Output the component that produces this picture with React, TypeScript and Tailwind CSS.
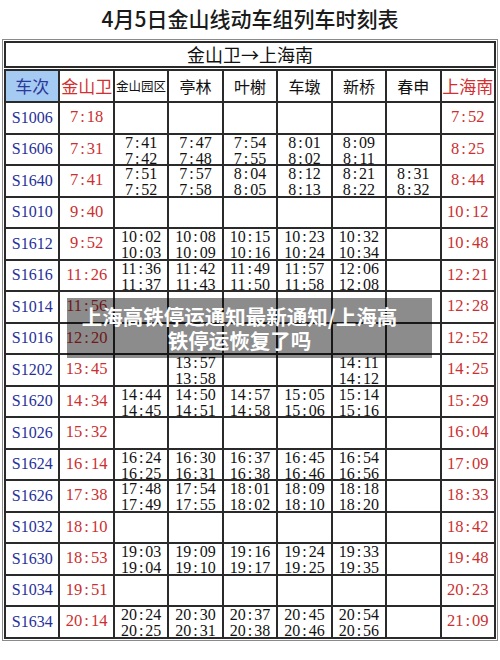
import React from "react";

type Cell = string | [string, string] | null;

interface Row {
  train: string;
  start: string;
  stops: Cell[]; // 金山园区, 亭林, 叶榭, 车墩, 新桥, 春申
  end: string;
}

const rows: Row[] = [
  { train: "S1006", start: "7:18", stops: [null, null, null, null, null, null], end: "7:52" },
  { train: "S1606", start: "7:31", stops: [["7:41", "7:42"], ["7:47", "7:48"], ["7:54", "7:55"], ["8:01", "8:02"], ["8:09", "8:11"], null], end: "8:25" },
  { train: "S1640", start: "7:41", stops: [["7:51", "7:52"], ["7:57", "7:58"], ["8:04", "8:05"], ["8:12", "8:13"], ["8:21", "8:22"], ["8:31", "8:32"]], end: "8:44" },
  { train: "S1010", start: "9:40", stops: [null, null, null, null, null, null], end: "10:12" },
  { train: "S1612", start: "9:52", stops: [["10:02", "10:03"], ["10:08", "10:09"], ["10:15", "10:16"], ["10:23", "10:24"], ["10:32", "10:34"], null], end: "10:48" },
  { train: "S1616", start: "11:26", stops: [["11:36", "11:37"], ["11:42", "11:43"], ["11:49", "11:50"], ["11:57", "11:58"], ["12:06", "12:08"], null], end: "12:21" },
  { train: "S1014", start: "11:56", stops: [null, null, null, null, null, null], end: "12:28" },
  { train: "S1016", start: "12:20", stops: [null, null, null, null, null, null], end: "12:52" },
  { train: "S1202", start: "13:45", stops: [null, ["13:57", "13:58"], null, null, ["14:11", "14:12"], null], end: "14:25" },
  { train: "S1620", start: "14:34", stops: [["14:44", "14:45"], ["14:50", "14:51"], ["14:57", "14:58"], ["15:05", "15:06"], ["15:14", "15:16"], null], end: "15:29" },
  { train: "S1026", start: "15:32", stops: [null, null, null, null, null, null], end: "16:04" },
  { train: "S1624", start: "16:14", stops: [["16:24", "16:25"], ["16:30", "16:31"], ["16:37", "16:38"], ["16:45", "16:46"], ["16:54", "16:56"], null], end: "17:09" },
  { train: "S1626", start: "17:38", stops: [["17:48", "17:49"], ["17:54", "17:55"], ["18:01", "18:02"], ["18:09", "18:10"], ["18:18", "18:20"], null], end: "18:33" },
  { train: "S1032", start: "18:10", stops: [null, null, null, null, null, null], end: "18:42" },
  { train: "S1630", start: "18:53", stops: [["19:03", "19:04"], ["19:09", "19:10"], ["19:16", "19:17"], ["19:24", "19:25"], ["19:33", "19:35"], null], end: "19:48" },
  { train: "S1034", start: "19:51", stops: [null, null, null, null, null, null], end: "20:23" },
  { train: "S1634", start: "20:14", stops: [["20:24", "20:25"], ["20:30", "20:31"], ["20:37", "20:38"], ["20:45", "20:46"], ["20:54", "20:56"], null], end: "21:09" },
];

const serif = "font-['Liberation_Serif','Noto_Sans_CJK_SC',serif]";
const cjk = "font-['Noto_Sans_CJK_SC','Noto_Sans',sans-serif]";
const cell = "border-r-2 border-b-2 border-[#2a2a2a] overflow-hidden";

function Time({ t }: { t: string }) {
  const [h, m] = t.split(":");
  return (
    <span>
      {h}
      <span className="mx-[2px]">:</span>
      {m}
    </span>
  );
}

export default function App() {
  return (
    <div className="relative w-[500px] h-[660px] bg-white overflow-hidden">
      <div className={`h-[38px] flex items-center justify-center text-[21px] font-medium text-[#1a1a1a] ${cjk}`}>
        4月5日金山线动车组列车时刻表
      </div>

      <div className="mx-[2px] mt-[1px] border border-[#8a8a8a] p-[1px]">
        <div className={`h-[27px] border-2 border-[#2a2a2a] flex items-center justify-center text-[18px] text-[#111] ${cjk}`}>
          金山卫→上海南
        </div>
        <div className="mt-[1px] border-l-2 border-t-2 border-[#2a2a2a] grid grid-cols-9">
          <div className={`${cell} h-[32px] bg-[#a6cbf3] flex items-center justify-center text-[17px] text-[#2b3a9a] ${cjk}`}>车次</div>
          <div className={`${cell} h-[32px] flex items-center justify-center text-[17px] text-[#d23030] ${cjk}`}>金山卫</div>
          <div className={`${cell} h-[32px] flex items-center justify-center text-[12.5px] text-[#111] ${cjk}`}>金山园区</div>
          {["亭林", "叶榭", "车墩", "新桥", "春申"].map((s) => (
            <div key={s} className={`${cell} h-[32px] flex items-center justify-center text-[16px] text-[#111] ${cjk}`}>
              {s}
            </div>
          ))}
          <div className={`${cell} h-[32px] flex items-center justify-center text-[17px] text-[#d23030] ${cjk}`}>上海南</div>

          {rows.map((r) => (
            <React.Fragment key={r.train}>
              <div className={`${cell} h-[31.5px] flex items-center justify-center text-[16px] text-[#27309a] ${serif}`}>{r.train}</div>
              <div className={`${cell} h-[31.5px] flex items-center justify-center text-[16.5px] text-[#cc2f2f] ${serif}`}>
                <Time t={r.start} />
              </div>
              {r.stops.map((s, i) => (
                <div key={i} className={`${cell} h-[31.5px] flex flex-col items-center text-[16px] leading-[16px] text-[#111] ${serif}`}>
                  {s && (
                    <>
                      <Time t={s[0]} />
                      <Time t={s[1]} />
                    </>
                  )}
                </div>
              ))}
              <div className={`${cell} h-[31.5px] flex items-center justify-center text-[16.5px] text-[#cc2f2f] ${serif}`}>
                <Time t={r.end} />
              </div>
            </React.Fragment>
          ))}
        </div>
      </div>

      <div className="absolute left-[67px] top-[298px] w-[365px] h-[60px] bg-black/45 flex flex-col items-center justify-center pr-[20px]">
        <div className={`text-white text-[20.5px] leading-[24px] font-bold ${cjk}`}>上海高铁停运通知最新通知/上海高</div>
        <div className={`text-white text-[20.5px] leading-[24px] font-bold ${cjk}`}>铁停运恢复了吗</div>
      </div>
    </div>
  );
}
